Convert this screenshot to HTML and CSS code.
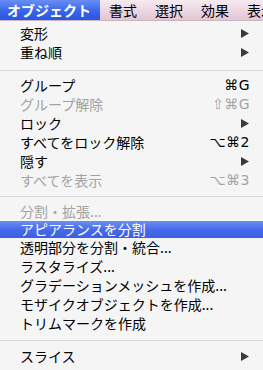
FILE: index.html
```html
<!DOCTYPE html>
<html lang="ja">
<head>
<meta charset="utf-8">
<link rel="stylesheet" href="styles.css">
</head>
<body>
<div class="menubar">
  <div class="mtitle active">オブジェクト</div>
  <div class="mtitle">書式</div>
  <div class="mtitle">選択</div>
  <div class="mtitle">効果</div>
  <div class="mtitle">表示</div>
</div>
<div class="menu">
  <div class="item"><span class="label">変形</span><svg class="arrow" width="8" height="9" viewBox="0 0 8 9"><polygon points="0,0 8,4.5 0,9"/></svg></div>
  <div class="item"><span class="label">重ね順</span><svg class="arrow" width="8" height="9" viewBox="0 0 8 9"><polygon points="0,0 8,4.5 0,9"/></svg></div>
  <div class="sep s1"></div>
  <div class="item"><span class="label">グループ</span><span class="key">⌘G</span></div>
  <div class="item off"><span class="label">グループ解除</span><span class="key">⇧⌘G</span></div>
  <div class="item"><span class="label">ロック</span><svg class="arrow" width="8" height="9" viewBox="0 0 8 9"><polygon points="0,0 8,4.5 0,9"/></svg></div>
  <div class="item"><span class="label">すべてをロック解除</span><span class="key">⌥⌘2</span></div>
  <div class="item"><span class="label">隠す</span><svg class="arrow" width="8" height="9" viewBox="0 0 8 9"><polygon points="0,0 8,4.5 0,9"/></svg></div>
  <div class="item off"><span class="label">すべてを表示</span><span class="key">⌥⌘3</span></div>
  <div class="sep s2"></div>
  <div class="item off"><span class="label">分割・拡張...</span></div>
  <div class="item hl"><span class="label">アピアランスを分割</span></div>
  <div class="item"><span class="label">透明部分を分割・統合...</span></div>
  <div class="item"><span class="label">ラスタライズ...</span></div>
  <div class="item"><span class="label">グラデーションメッシュを作成...</span></div>
  <div class="item"><span class="label">モザイクオブジェクトを作成...</span></div>
  <div class="item"><span class="label">トリムマークを作成</span></div>
  <div class="sep s3"></div>
  <div class="item"><span class="label">スライス</span><svg class="arrow" width="8" height="9" viewBox="0 0 8 9"><polygon points="0,0 8,4.5 0,9"/></svg></div>
</div>
</body>
</html>
```

FILE: styles.css
```css
html, body {
  margin: 0;
  padding: 0;
}
body {
  width: 263px;
  height: 370px;
  overflow: hidden;
  background: #f5f5f5;
  font-family: "Noto Sans CJK JP", "DejaVu Sans", sans-serif;
  font-size: 14px;
  color: #000;
}
.menubar {
  display: flex;
  height: 21px;
  white-space: nowrap;
  overflow: hidden;
  background: linear-gradient(#f6eaf0, #e2c6d4);
  border-bottom: 1px solid #c9b3bf;
  box-sizing: border-box;
}
.mtitle {
  padding: 0 9px;
  line-height: 20px;
  flex: none;
}
.mtitle.active {
  width: 100px;
  box-sizing: border-box;
  padding-left: 7px;
  color: #fff;
  font-weight: bold;
  background: linear-gradient(#6a8ef5, #3562ea 60%, #2a56e2);
}
.menu {
  padding-top: 3px;
}
.item {
  height: 19px;
  display: flex;
  align-items: center;
  padding: 0 13px 0 20px;
}
.label {
  flex: 1;
  line-height: 17px;
  white-space: nowrap;
}
.key {
  font-family: "DejaVu Sans", sans-serif;
  font-size: 14px;
  line-height: 17px;
  letter-spacing: 0.5px;
}
.arrow {
  fill: #3a3a3a;
  margin-right: 1px;
}
.off {
  color: #a3a3a3;
}
.hl {
  height: 17px;
  color: #fff;
  background: linear-gradient(#6d8ff2, #4469e8 55%, #3a5fe4);
}
.sep {
  height: 1px;
  background: #d9d9d9;
}
.s1 { margin: 8px 0 5px; }
.s2 { margin: 6px 0 5px; }
.s3 { margin: 7px 0 6px; }
```
